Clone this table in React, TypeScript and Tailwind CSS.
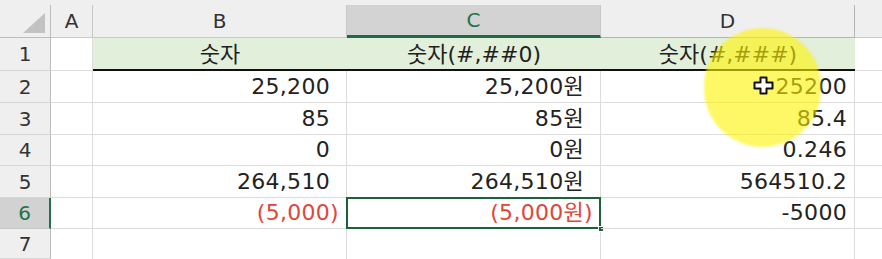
import React from 'react';

const FONT = "font-['DejaVu_Sans','Noto_Sans_CJK_KR',sans-serif]";

type Val = { text: string; red?: boolean };

const rows: Val[][] = [
  [{ text: '25,200' }, { text: '25,200원' }, { text: '25200' }],
  [{ text: '85' }, { text: '85원' }, { text: '85.4' }],
  [{ text: '0' }, { text: '0원' }, { text: '0.246' }],
  [{ text: '264,510' }, { text: '264,510원' }, { text: '564510.2' }],
  [{ text: '(5,000)', red: true }, { text: '(5,000원)', red: true }, { text: '-5000' }],
];

// row heights after the header row (rows 2..6)
const heights = ['h-[32px]', 'h-[32px]', 'h-[31px]', 'h-[32px]', 'h-[31px]'];

function RowHead({ n, selected, h }: { n: number; selected?: boolean; h: string }) {
  return (
    <div
      className={`${h} w-[51px] shrink-0 flex items-center justify-center text-[20px] border-b ${
        selected
          ? 'bg-[#d2d2d2] text-[#217346] border-r-2 border-r-[#217346] border-b-[#c8c8c8]'
          : 'bg-[#efefef] text-[#333] border-r border-r-[#bcbcbc] border-b-[#d6d6d6]'
      }`}
    >
      {n}
    </div>
  );
}

function NumCell({ v, pad, selected }: { v: Val; pad: string; selected?: boolean }) {
  return (
    <div
      className={`relative w-[254px] shrink-0 flex items-end justify-end pb-[4px] ${pad} border-r border-b border-[#dcdcdc] leading-[22px] text-[22px] tracking-[0.3px] ${
        v.red ? 'text-[#e0463a]' : 'text-[#222]'
      }`}
    >
      {v.text}
      {selected && (
        <>
          <div className="absolute left-[-1px] top-[-1px] right-[-1px] bottom-[-1px] border-2 border-[#1b6139]" />
          <div className="absolute right-[-4px] bottom-[-4px] w-[6px] h-[6px] bg-[#1b6139] border border-white" />
        </>
      )}
    </div>
  );
}

function Cursor() {
  return (
    <svg width="21" height="19" viewBox="0 0 21 19" className="absolute left-[753px] top-[76px]">
      <path
        d="M7.5 1.5h6v5h6v6h-6v5h-6v-5h-6v-6h6z"
        fill="#fff"
        stroke="#111"
        strokeWidth="2"
        strokeLinejoin="round"
      />
    </svg>
  );
}

export default function App() {
  return (
    <div className={`relative w-[882px] h-[259px] overflow-hidden bg-white ${FONT}`}>
      {/* column headers */}
      <div className="flex h-[38px] bg-[#efefef] pt-[5px] text-[20px] text-[#333]">
        <div className="w-[51px] shrink-0 relative border-r border-b border-[#bcbcbc]">
          <svg width="51" height="33" className="absolute left-0 top-[-5px]">
            <polygon points="45,13 45,33 23,33" fill="#c2c2c2" />
          </svg>
        </div>
        <div className="w-[42px] shrink-0 flex items-center justify-center border-r border-b border-[#c8c8c8]">A</div>
        <div className="w-[254px] shrink-0 flex items-center justify-center border-r border-b border-[#c8c8c8]">B</div>
        <div className="w-[254px] shrink-0 flex items-center justify-center bg-[#d3d3d3] text-[#217346] border-r border-r-[#c8c8c8] border-b-[3px] border-b-[#1e6b41]">
          C
        </div>
        <div className="w-[254px] shrink-0 flex items-center justify-center border-r border-b border-[#b4b4b4]">D</div>
        <div className="flex-1 border-b border-[#c8c8c8]" />
      </div>

      {/* row 1 */}
      <div className="flex h-[33px]">
        <RowHead n={1} h="h-[33px]" />
        <div className="w-[42px] shrink-0 border-r border-b border-[#dcdcdc]" />
        <div className="flex w-[762px] shrink-0 bg-[#e2efda] border-b-2 border-[#111] text-[22px] leading-[22px] text-[#1f1f1f]">
          <div className="w-[254px] flex items-end justify-center pb-[3px]">숫자</div>
          <div className="w-[254px] flex items-end justify-center pb-[3px]">숫자(#,##0)</div>
          <div className="w-[254px] flex items-end justify-center pb-[3px]">숫자(#,###)</div>
        </div>
        <div className="flex-1 border-b border-[#dcdcdc]" />
      </div>

      {/* rows 2..6 */}
      {rows.map((r, i) => (
        <div key={i} className={`flex ${heights[i]}`}>
          <RowHead n={i + 2} h={heights[i]} selected={i === 4} />
          <div className="w-[42px] shrink-0 border-r border-b border-[#dcdcdc]" />
          <NumCell v={r[0]} pad={r[0].red ? 'pr-[7px]' : 'pr-[16px]'} />
          <NumCell v={r[1]} pad={r[1].red ? 'pr-[7px]' : 'pr-[16px]'} selected={i === 4} />
          <NumCell v={r[2]} pad="pr-[7px]" />
          <div className="flex-1 border-b border-[#dcdcdc]" />
        </div>
      ))}

      {/* row 7 */}
      <div className="flex h-[30px]">
        <RowHead n={7} h="h-[30px]" />
        <div className="w-[42px] shrink-0 border-r border-[#dcdcdc]" />
        <div className="w-[254px] shrink-0 border-r border-[#dcdcdc]" />
        <div className="w-[254px] shrink-0 border-r border-[#dcdcdc]" />
        <div className="w-[254px] shrink-0 border-r border-[#dcdcdc]" />
        <div className="flex-1" />
      </div>

      {/* highlight + cursor from the screen recording */}
      <div className="absolute left-[704px] top-[28px] w-[117px] h-[119px] rounded-full bg-[rgba(255,244,0,0.6)] blur-[1px]" />
      <Cursor />
    </div>
  );
}
